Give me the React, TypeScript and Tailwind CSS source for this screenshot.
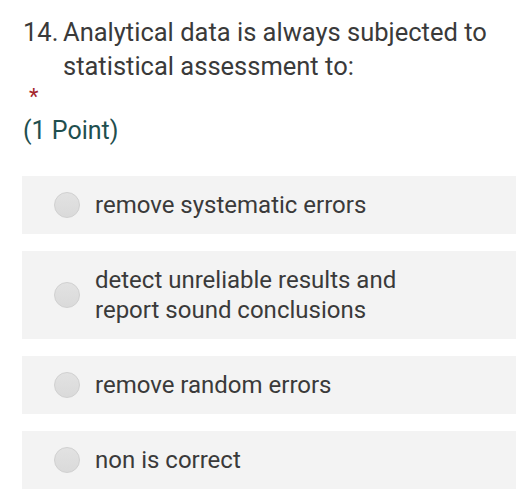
export default function App() {
  const options = [
    'remove systematic errors',
    'detect unreliable results and report sound conclusions',
    'remove random errors',
    'non is correct',
  ];
  return (
    <div className="min-h-screen bg-white font-['Roboto',sans-serif] text-[#3a3a3a]">
      <div className="pl-[23px] pr-[2px] pt-[15px]">
        <div className="flex text-[25.5px] leading-[34px]">
          <span className="w-[40px] shrink-0">14.</span>
          <span>Analytical data is always subjected to statistical assessment to:</span>
        </div>
        <div className="pl-[6px] h-[28px] text-[22px] leading-[28px] text-[#a4262c]">*</div>
        <div className="mt-[6px] text-[25px] leading-[28px] text-[#1f4f4f]">(1 Point)</div>
        <div className="mt-[31px] flex flex-col gap-[17px] -ml-[1px]">
          {options.map((o) => (
            <div key={o} className="flex items-center bg-[#f3f3f3] py-[14px] pl-[32px] pr-[20px]">
              <span className="h-[26px] w-[26px] shrink-0 rounded-full border border-[#d0d0d0] bg-gradient-to-b from-[#e2e2e2] to-[#dadada]" />
              <span className="ml-[15px] max-w-[330px] text-[24px] leading-[30px]">{o}</span>
            </div>
          ))}
        </div>
      </div>
    </div>
  );
}
